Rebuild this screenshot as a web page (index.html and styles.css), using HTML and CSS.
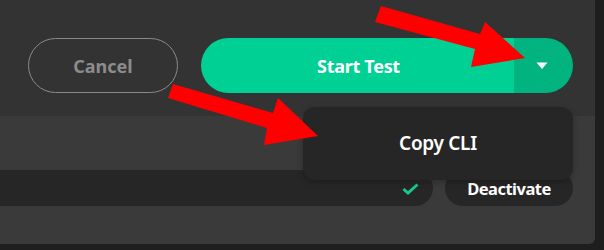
FILE: index.html
```html
<!DOCTYPE html>
<html>
<head>
<meta charset="utf-8">
<link rel="stylesheet" href="styles.css">
</head>
<body>
<div class="panel">
  <div class="actions">
    <button class="btn-cancel">Cancel</button>
    <div class="split">
      <button class="btn-start">Start Test</button>
      <button class="btn-caret"><svg width="12" height="8" viewBox="0 0 12 8"><polygon points="0.5,0.5 11.5,0.5 6,7" fill="#fff"/></svg></button>
    </div>
  </div>
  <div class="section"></div>
  <div class="row">
    <div class="track">
      <svg class="check" width="17" height="12" viewBox="0 0 17 12"><polyline points="1.5,6 6,10 15.5,1.5" fill="none" stroke="#1cc690" stroke-width="3" stroke-linejoin="miter"/></svg>
    </div>
    <button class="btn-deactivate">Deactivate</button>
  </div>
  <div class="rest"></div>
</div>
<div class="menu"><span>Copy CLI</span></div>
<svg class="arrows" width="604" height="250" viewBox="0 0 604 250">
  <polygon fill="#ff0000" points="381,6 375,22 475,49 471,67 525,58 485,22 480,34"/>
  <polygon fill="#ff0000" points="173,84 168,98 267,128 264,145 318,136 278,98 273,113"/>
</svg>
</body>
</html>
```
FILE: styles.css
```css
html, body {
  margin: 0;
  padding: 0;
  background: #1e1e1e;
  font-family: "Noto Sans", "Open Sans", sans-serif;
}
body {
  position: relative;
  width: 604px;
  height: 250px;
  overflow: hidden;
}
.panel {
  width: 595px;
  height: 244px;
  background: #3a3a3a;
  border-bottom-right-radius: 6px;
  overflow: hidden;
  display: flex;
  flex-direction: column;
}
.actions {
  height: 116px;
  box-sizing: border-box;
  background: #333333;
  padding: 38px 0 0 28px;
  display: flex;
  align-items: flex-start;
  gap: 23px;
}
button {
  font-family: inherit;
  border: none;
  margin: 0;
  padding: 0;
  cursor: pointer;
}
.btn-cancel {
  width: 150px;
  height: 55px;
  border-radius: 28px;
  border: 1px solid #8a8a8a;
  background: transparent;
  color: #8c8c8c;
  font-size: 18px;
  font-weight: 700;
}
.split {
  width: 372px;
  height: 55px;
  border-radius: 28px;
  overflow: hidden;
  display: flex;
}
.btn-start {
  flex: 1;
  background: #00d094;
  color: #ffffff;
  font-size: 18px;
  font-weight: 700;
  letter-spacing: -0.3px;
  padding-left: 2px;
}
.btn-caret {
  width: 59px;
  background: #00b37f;
  display: flex;
  align-items: center;
  justify-content: center;
  padding-right: 4px;
}
.section {
  height: 54px;
  background: #3a3a3a;
}
.row {
  height: 36px;
  display: flex;
  gap: 12px;
  padding-right: 22px;
}
.track {
  width: 433px;
  background: #262626;
  border-radius: 0 18px 18px 0;
  display: flex;
  align-items: center;
  justify-content: flex-end;
  padding-right: 14px;
  box-sizing: border-box;
}
.check {
  margin-top: 1px;
}
.btn-deactivate {
  flex: 1;
  background: #262626;
  border-radius: 18px;
  color: #ffffff;
  font-size: 16.5px;
  font-weight: 700;
  letter-spacing: -0.5px;
}
.rest {
  flex: 1;
}
.menu {
  position: absolute;
  left: 303px;
  top: 107px;
  width: 270px;
  height: 73px;
  background: #262626;
  border-radius: 12px;
  box-shadow: 0 2px 6px rgba(0,0,0,0.25);
  display: flex;
  align-items: center;
  justify-content: center;
  color: #ffffff;
  font-size: 19px;
  font-weight: 600;
  letter-spacing: -0.3px;
  padding-bottom: 1px;
  box-sizing: border-box;
}
.arrows {
  position: absolute;
  left: 0;
  top: 0;
  pointer-events: none;
}
```
